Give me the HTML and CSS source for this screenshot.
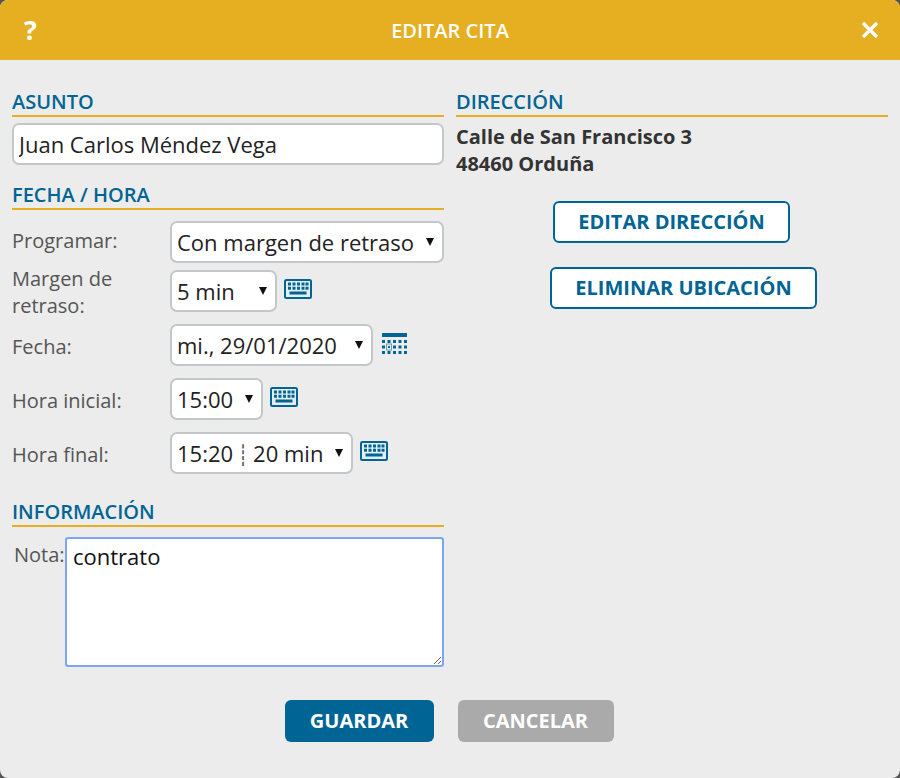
FILE: index.html
```html
<!DOCTYPE html>
<html lang="es">
<head>
<meta charset="utf-8">
<title>Editar cita</title>
<link rel="stylesheet" href="styles.css">
</head>
<body>
<svg class="defs" width="0" height="0" aria-hidden="true">
  <symbol id="kbd" viewBox="0 0 28 20">
    <rect x="1" y="1" width="26" height="18" rx="1.500" fill="#e4eef3" stroke="#006494" stroke-width="2"/>
    <path fill="#006494" d="M4 3.500h3v3H4zM8.500 3.500h3v3h-3zM13 3.500h3v3h-3zM17.500 3.500h3v3h-3zM21.500 3.500h3v3h-3zM4 7.800h3v3H4zM8.500 7.800h3v3h-3zM13 7.800h3v3h-3zM17.500 7.800h3v3h-3zM21.500 7.800h3v3h-3zM5.500 12.500h17V15.500h-17z"/>
  </symbol>
  <symbol id="cal" viewBox="0 0 25 21">
    <path fill="#006494" d="M0 0h25v4H0zM0 7h3v3H0zM5.500 7h3v3h-3zM11 7h3v3h-3zM16.500 7h3v3h-3zM22 7h3v3h-3zM0 12.500h3v3H0zM6 13h2v2H6zM11 12.500h3v3h-3zM16.500 12.500h3v3h-3zM22 12.500h3v3h-3zM0 18h3v3H0zM5.500 18h3v3h-3zM11 18h3v3h-3zM16.500 18h3v3h-3zM22 18h3v3h-3z"/>
    <rect x="4.500" y="11" width="5" height="6" fill="none" stroke="#6b9cb8" stroke-width="1"/>
  </symbol>
</svg>
<div class="dialog">
  <header class="head">
    <span class="help">?</span>
    <h1 class="title">EDITAR CITA</h1>
    <svg class="close" width="18" height="18" viewBox="0 0 18 18" aria-label="Cerrar"><path d="M2 2l14 14M16 2L2 16" stroke="#fff" stroke-width="3.400" fill="none"/></svg>
  </header>
  <main class="columns">
    <div class="col">
      <section>
        <h2 class="sect">ASUNTO</h2>
        <input class="subject" type="text" value="Juan Carlos Méndez Vega">
      </section>
      <section class="sec-date">
        <h2 class="sect">FECHA / HORA</h2>
        <div class="form">
          <label class="lbl lbl-first">Programar:</label>
          <div class="ctl"><div class="sel w274">Con margen de retraso</div></div>
          <label class="lbl">Margen de retraso:</label>
          <div class="ctl"><div class="sel w107">5 min</div><svg class="ico"><use href="#kbd"/></svg></div>
          <label class="lbl">Fecha:</label>
          <div class="ctl"><div class="sel w203">mi., 29/01/2020</div><svg class="ico cal"><use href="#cal"/></svg></div>
          <label class="lbl">Hora inicial:</label>
          <div class="ctl"><div class="sel w93">15:00</div><svg class="ico"><use href="#kbd"/></svg></div>
          <label class="lbl">Hora final:</label>
          <div class="ctl"><div class="sel w183">15:20<span class="sep">┊</span>20 min</div><svg class="ico"><use href="#kbd"/></svg></div>
        </div>
      </section>
      <section class="sec-info">
        <h2 class="sect">INFORMACIÓN</h2>
        <div class="note">
          <label class="note-lbl">Nota:</label>
          <textarea class="area">contrato</textarea>
        </div>
      </section>
    </div>
    <div class="col">
      <h2 class="sect">DIRECCIÓN</h2>
      <p class="addr">Calle de San Francisco 3<br>48460 Orduña</p>
      <div class="actions">
        <button class="outline edit">EDITAR DIRECCIÓN</button>
        <button class="outline remove">ELIMINAR UBICACIÓN</button>
      </div>
    </div>
  </main>
  <footer class="foot">
    <button class="btn save">GUARDAR</button>
    <button class="btn cancel">CANCELAR</button>
  </footer>
</div>
</body>
</html>
```
FILE: styles.css
```css
html, body { margin: 0; padding: 0; height: 100%; background: #555; overflow: hidden; }
body { font-family: "Open Sans", sans-serif; }
.defs { position: absolute; }
.dialog { width: 900px; height: 778px; background: #ececec; border-radius: 8px; overflow: hidden; display: flex; flex-direction: column; }
.head { height: 60px; flex: none; background: #e5af21; display: grid; grid-template-columns: 1fr auto 1fr; align-items: center; padding: 0 21px; color: #fff; }
.help { font-size: 27px; font-weight: 700; line-height: 60px; margin-left: 3px; }
.title { margin: 0; font-size: 20px; font-weight: 600; }
.close { display: block; justify-self: end; }
.columns { flex: none; height: 640px; padding: 28px 0 0 12px; box-sizing: border-box; display: grid; grid-template-columns: 432px 432px; column-gap: 12px; }
.col { min-width: 0; }
.sect { margin: 0; height: 27px; border-bottom: 2px solid #e5af21; color: #006494; font-size: 20px; font-weight: 600; line-height: 27px; }
.subject { display: block; box-sizing: border-box; width: 432px; height: 42px; margin: 6px 0 0; padding: 0 5px; border: 2px solid #c4c7ca; border-radius: 7px; background: #fff; color: #222; font: 22px "Open Sans", sans-serif; outline: none; }
.sec-date { margin-top: 16px; }
.form { display: grid; grid-template-columns: 158px auto; grid-template-rows: 44px repeat(4, 54px); margin-top: 10px; align-items: center; }
.lbl { color: #555; font-size: 20px; line-height: 27px; padding-top: 2px; }
.lbl-first { margin-bottom: 6px; }
.ctl { display: flex; align-items: center; gap: 7px; }
.sel { box-sizing: border-box; height: 42px; position: relative; border: 2px solid #c4c7ca; border-radius: 7px; background: #fff; color: #222; font-size: 22px; line-height: 38px; padding-left: 5px; white-space: nowrap; }
.sel::after { content: ""; position: absolute; right: 8px; top: 15px; border-left: 4.500px solid transparent; border-right: 4.500px solid transparent; border-top: 8px solid #111; }
.sep { display: inline-block; width: 20px; padding-right: 1px; box-sizing: border-box; text-align: center; font-size: 20px; color: #555; }
.w274 { width: 274px; }
.w107 { width: 107px; }
.w203 { width: 203px; }
.w93 { width: 93px; }
.w183 { width: 183px; }
.ico { width: 28px; height: 20px; flex: none; margin-top: -4px; }
.ico.cal { width: 25px; height: 21px; margin-left: 2px; margin-top: -3px; }
.sec-info { margin-top: 18px; }
.note { display: flex; margin-top: 10px; }
.note-lbl { color: #555; font-size: 20px; line-height: 27px; margin: 4px 0 0 2px; width: 52px; }
.area { display: block; box-sizing: border-box; width: 377px; height: 128px; margin: 1px 0 0; padding: 2px 6px; border: 1px solid #b5b5b5; border-radius: 2px; outline: 2px solid #7aa6f2; outline-offset: -1px; background: #fff; color: #111; font: 22px "Open Sans", sans-serif; resize: both; }
.addr { margin: 6px 0 0; color: #333; font-size: 20px; font-weight: 700; line-height: 27px; }
.actions { display: flex; flex-direction: column; align-items: flex-start; gap: 24px; margin-top: 24px; }
.outline { box-sizing: border-box; height: 42px; padding: 0 0 2px; border: 2px solid #006494; border-radius: 6px; background: #fff; color: #006494; font: 700 20px "Open Sans", sans-serif; }
.edit { width: 237px; margin-left: 97px; }
.remove { width: 267px; margin-left: 94px; }
.foot { flex: none; display: flex; justify-content: center; gap: 24px; padding-right: 2px; }
.btn { box-sizing: border-box; height: 42px; border: 0; padding: 0 0 2px; border-radius: 6px; color: #fff; font: 700 20px "Open Sans", sans-serif; }
.save { width: 149px; background: #006494; }
.cancel { width: 156px; background: #aaa; }
```
